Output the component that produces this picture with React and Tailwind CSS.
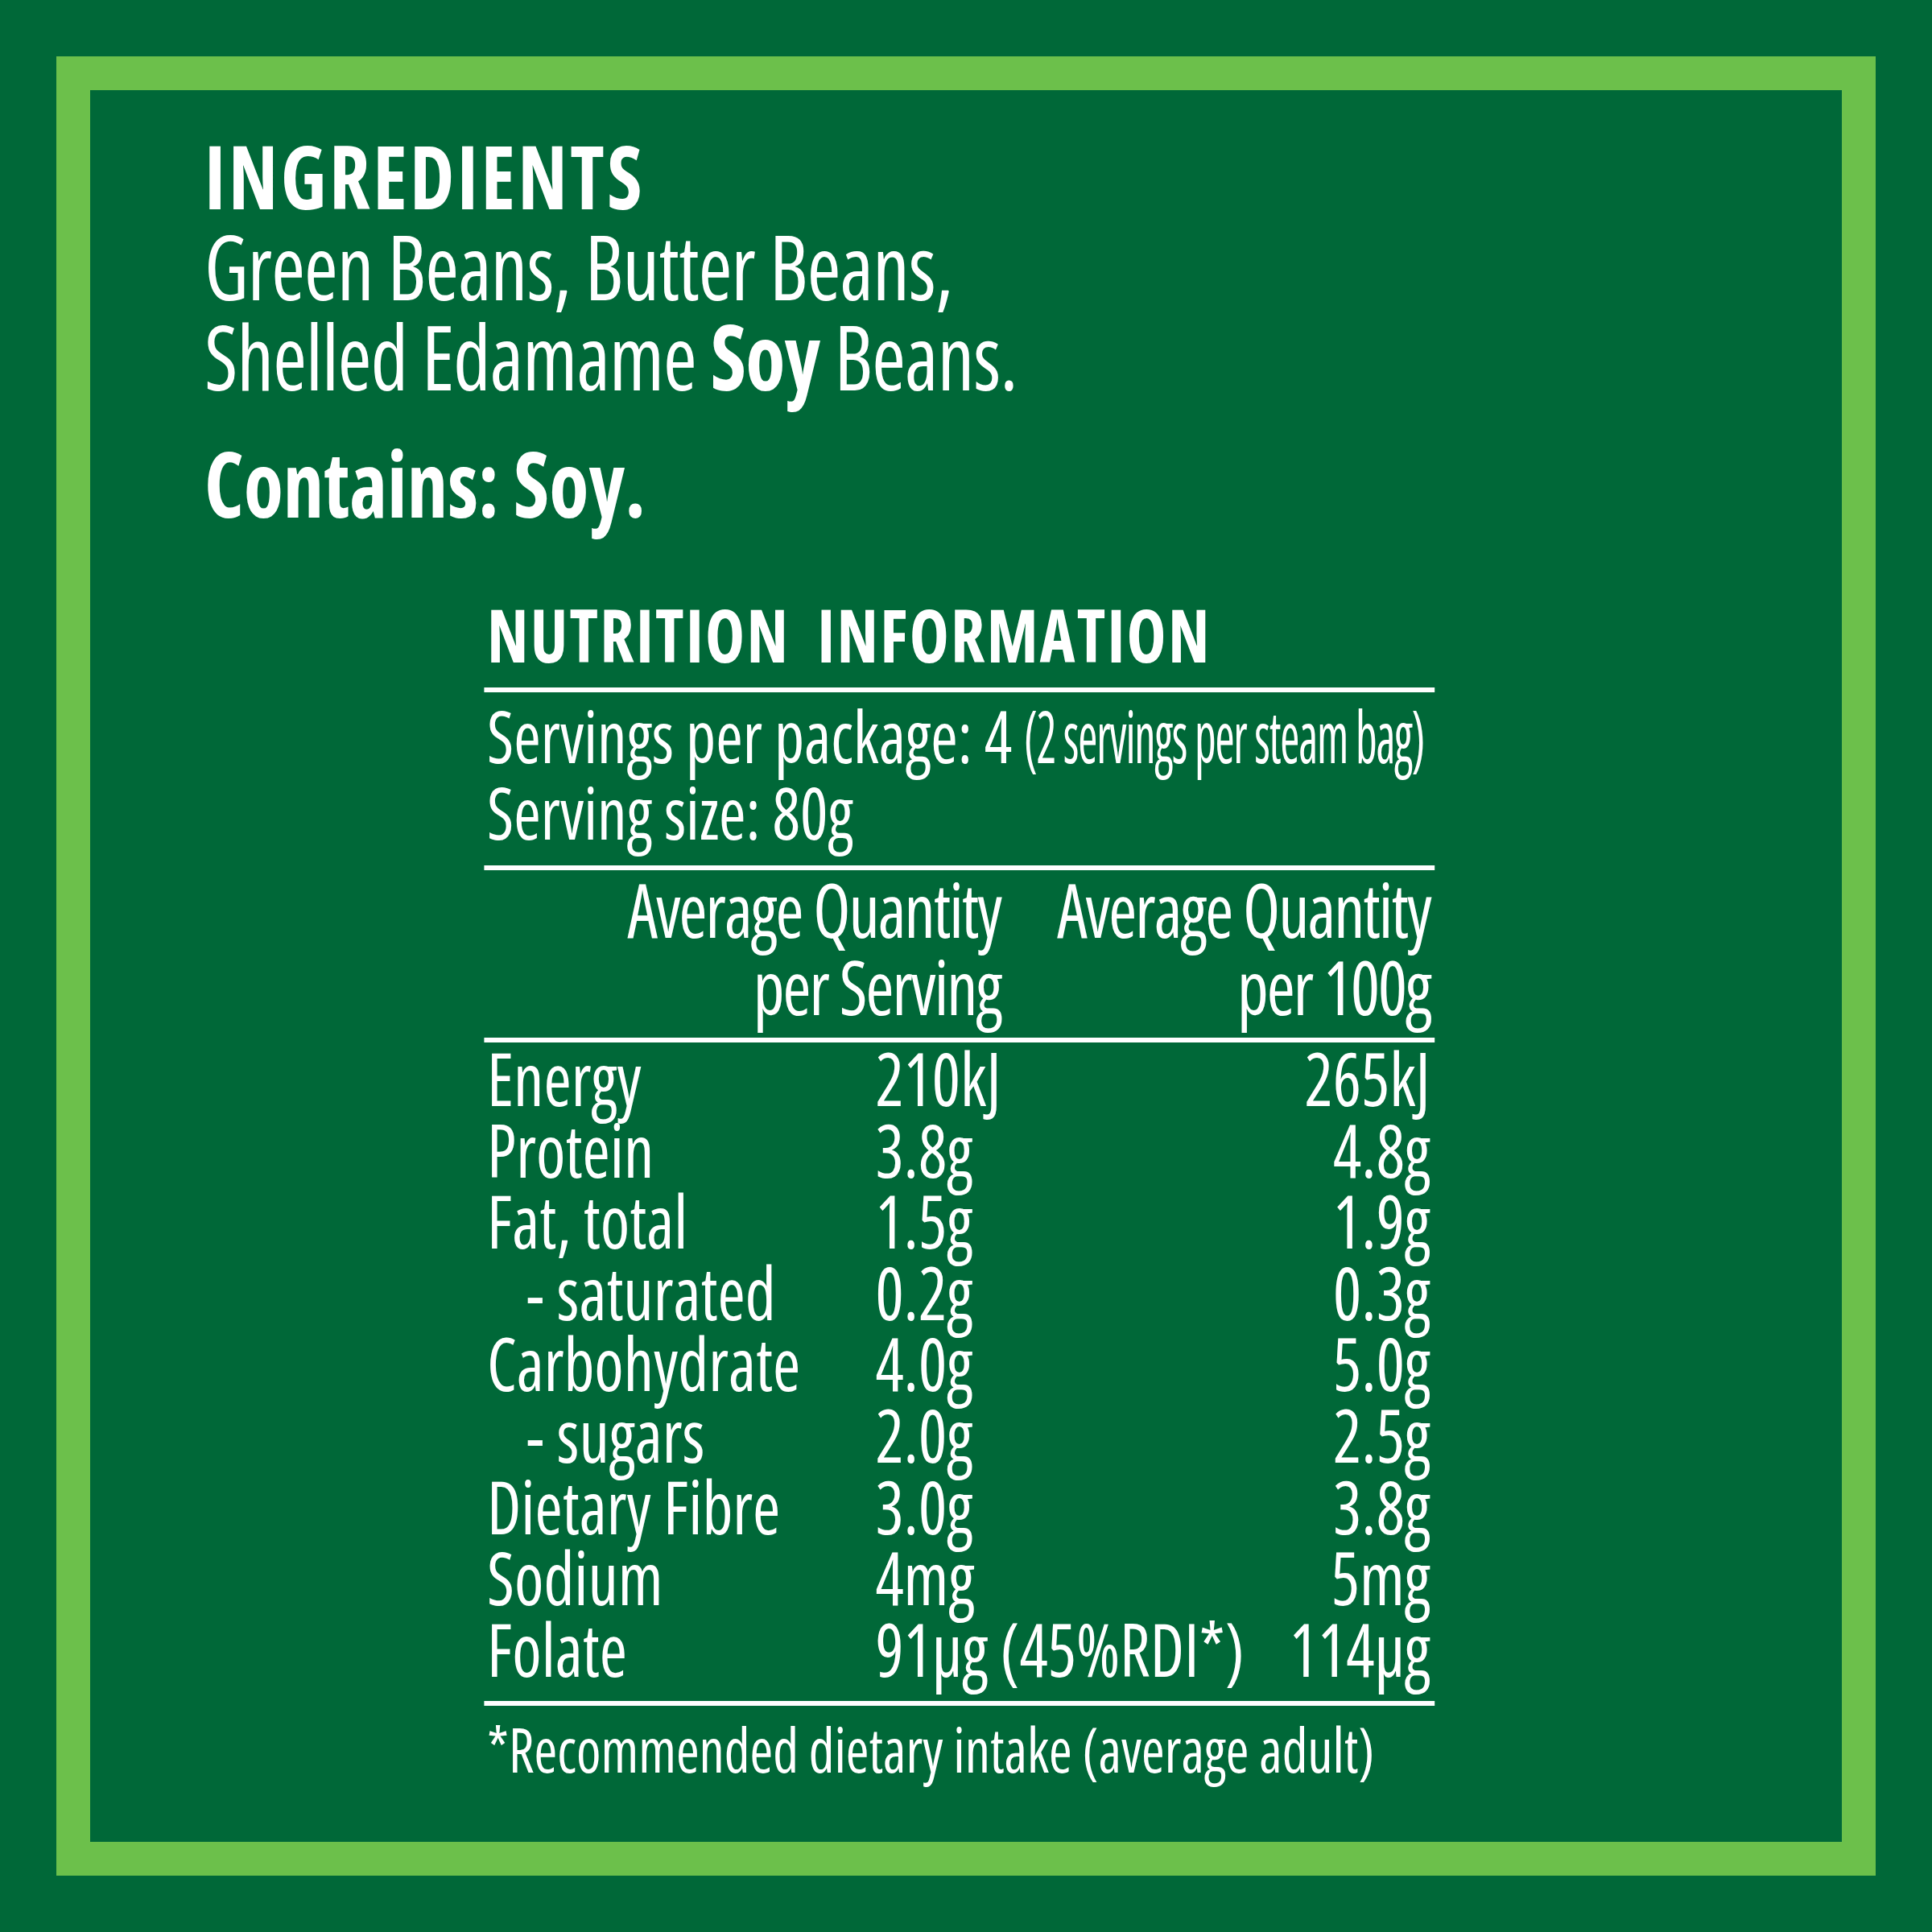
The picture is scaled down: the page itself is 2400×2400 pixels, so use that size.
import React from 'react';

const rows = [
  { label: 'Energy', serving: '210kJ', per100: '265kJ' },
  { label: 'Protein', serving: '3.8g', per100: '4.8g' },
  { label: 'Fat, total', serving: '1.5g', per100: '1.9g' },
  { label: '- saturated', serving: '0.2g', per100: '0.3g', sub: true },
  { label: 'Carbohydrate', serving: '4.0g', per100: '5.0g' },
  { label: '- sugars', serving: '2.0g', per100: '2.5g', sub: true },
  { label: 'Dietary Fibre', serving: '3.0g', per100: '3.8g' },
  { label: 'Sodium', serving: '4mg', per100: '5mg' },
  { label: 'Folate', serving: '91µg (45%RDI*)', per100: '114µg' },
];

const Rule = () => <div className="h-[6px] bg-white" />;

export default function App() {
  return (
    <div className="w-[2400px] h-[2400px] bg-[#006838] p-[70px] font-['Open_Sans',sans-serif] font-stretch-condensed text-white">
      <div className="h-full border-[42px] border-[#6cc04b] pl-[142px] pt-[50px]">
        {/* condensed face: Open Sans at 75% width, squeezed a bit further */}
        <div className="origin-top-left scale-x-[0.9]">
          <section>
            <h1 className="text-[110px] leading-[110px] font-bold tracking-[0.035em]">INGREDIENTS</h1>
            <p className="text-[112px] leading-[112px] mt-[2px] tracking-[-0.008em]">
              Green Beans, Butter Beans,
              <br />
              Shelled Edamame <span className="font-bold">Soy</span> Beans.
            </p>
            <p className="text-[112px] leading-[112px] font-bold mt-[46px]">Contains: Soy.</p>
          </section>

          <section className="ml-[386px] mt-[86px] w-[1312px]">
            <h2 className="text-[92px] leading-[92px] font-bold pl-[4px] whitespace-pre tracking-[0.027em]">NUTRITION  INFORMATION</h2>
            <div className="mt-[20px]">
              <Rule />
            </div>
            <div className="text-[90px] leading-[95px] pl-[4px] mt-[6px]">
              <div className="whitespace-nowrap">
                Servings per package: 4{' '}
                {/* the bracketed note is set even tighter on the pack */}
                <span className="inline-block origin-left scale-x-[0.72] tracking-[-0.02em]">(2 servings per steam bag)</span>
              </div>
              <div>Serving size: 80g</div>
            </div>
            <div className="mt-[19px]">
              <Rule />
            </div>
            <div className="flex text-[94px] leading-[96px] text-right tracking-[-0.023em] pr-[6px]">
              <div className="w-[713px] whitespace-nowrap">
                Average Quantity
                <br />
                per Serving
              </div>
              <div className="flex-1 whitespace-nowrap">
                Average Quantity
                <br />
                per 100g
              </div>
            </div>
            <div className="mt-[16px]">
              <Rule />
            </div>
            <div className="grid grid-cols-[536px_1fr_auto] text-[92px] leading-[88.6px] pl-[4px] pr-[6px]">
              {rows.map((r) => (
                <React.Fragment key={r.label}>
                  <div className={r.sub ? 'pl-[54px] whitespace-nowrap' : 'whitespace-nowrap'}>{r.label}</div>
                  <div className="whitespace-nowrap">{r.serving}</div>
                  <div className="text-right whitespace-nowrap">{r.per100}</div>
                </React.Fragment>
              ))}
            </div>
            <div className="mt-[21px]">
              <Rule />
            </div>
            <p className="text-[77px] leading-[77px] mt-[15px] pl-[4px] whitespace-nowrap">
              *Recommended dietary intake (average adult)
            </p>
          </section>
        </div>
      </div>
    </div>
  );
}
